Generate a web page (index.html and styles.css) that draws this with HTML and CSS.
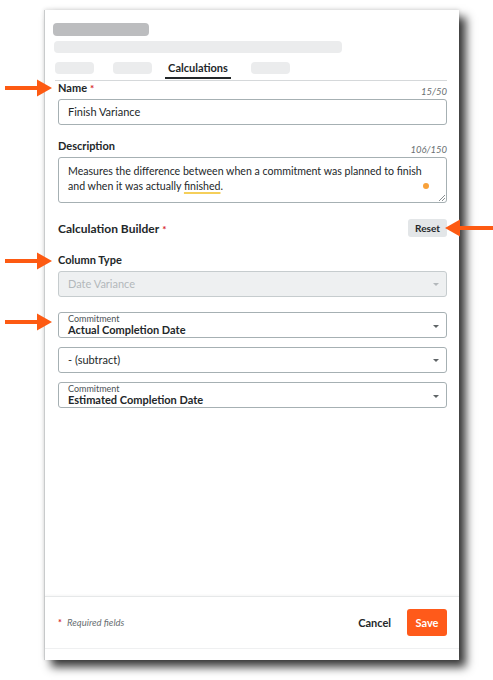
FILE: index.html
```html
<!DOCTYPE html>
<html lang="en">
<head>
    <meta charset="UTF-8">
    <meta name="viewport" content="width=device-width, initial-scale=1.0">
    <title>Calculations</title>
    <link rel="stylesheet" href="styles.css">
</head>
<body>
<div class="stage">
    <div class="panel">
        <div class="panel-head">
            <div class="sk sk-title"></div>
            <div class="sk sk-sub"></div>
            <div class="tabs">
                <div class="sk sk-tab"></div>
                <div class="sk sk-tab tab-2"></div>
                <div class="tab active">Calculations</div>
                <div class="sk sk-tab tab-4"></div>
            </div>
        </div>

        <div class="panel-body">
            <div class="label-row">
                <span class="label">Name<span class="req">*</span></span>
                <span class="count">15/50</span>
            </div>
            <div class="field">Finish Variance</div>

            <div class="label-row group">
                <span class="label">Description</span>
                <span class="count">106/150</span>
            </div>
            <div class="field textarea">
                <p class="desc">Measures the difference between when a commitment was planned to finish<br>and when it was actually <span class="spell">finished</span>.</p>
                <span class="dot"></span>
                <svg class="resize" width="7" height="7" viewBox="0 0 7 7">
                    <path d="M1 7 L7 1 M4 7 L7 4" stroke="#6b7275" stroke-width="0.8" fill="none"/>
                </svg>
            </div>

            <div class="builder-row">
                <span class="builder-title">Calculation Builder<span class="req">*</span></span>
                <button class="btn-reset">Reset</button>
            </div>

            <div class="label-row group">
                <span class="label">Column Type</span>
            </div>
            <div class="field select disabled">
                <span>Date Variance</span>
                <span class="caret"></span>
            </div>

            <div class="field select two-line first">
                <div>
                    <div class="sub">Commitment</div>
                    <div class="main">Actual Completion Date</div>
                </div>
                <span class="caret"></span>
            </div>
            <div class="field select next">
                <span>- (subtract)</span>
                <span class="caret"></span>
            </div>
            <div class="field select two-line next">
                <div>
                    <div class="sub">Commitment</div>
                    <div class="main">Estimated Completion Date</div>
                </div>
                <span class="caret"></span>
            </div>
        </div>

        <div class="panel-foot">
            <span class="req-note"><span class="req">*</span> Required fields</span>
            <button class="btn-cancel">Cancel</button>
            <button class="btn-save">Save</button>
        </div>
    </div>

    <!-- callout arrows -->
    <svg class="arrow arrow-name" width="54" height="20" viewBox="0 0 54 20">
        <path d="M5 8 H37 V1.5 L52 10 L37 18.5 V12 H5 Z" fill="#fd5a12"/>
    </svg>
    <svg class="arrow arrow-type" width="54" height="20" viewBox="0 0 54 20">
        <path d="M5 8 H37 V1.5 L52 10 L37 18.5 V12 H5 Z" fill="#fd5a12"/>
    </svg>
    <svg class="arrow arrow-commit" width="54" height="20" viewBox="0 0 54 20">
        <path d="M5 8 H37 V1.5 L52 10 L37 18.5 V12 H5 Z" fill="#fd5a12"/>
    </svg>
    <svg class="arrow arrow-reset" width="50" height="20" viewBox="0 0 50 20">
        <path d="M50 8 H17 V1.5 L2 10 L17 18.5 V12 H50 Z" fill="#fd5a12"/>
    </svg>
</div>
</body>
</html>
```

FILE: styles.css
```css
body {
    margin: 0;
    font-family: 'Lato', 'Noto Sans', sans-serif;
    color: #232729;
    background-color: #fff;
}

.stage {
    position: relative;
    width: 493px;
    height: 680px;
    padding-top: 10px;
    box-sizing: border-box;
    overflow: hidden;
}

.panel {
    margin-left: 44px;
    width: 415px;
    height: 650px;
    box-sizing: border-box;
    border-left: 1px solid #c9cbcc;
    background-color: #fff;
    box-shadow: 7px 7px 9px rgba(0, 0, 0, 0.78), 0 -1px 4px rgba(0, 0, 0, 0.12);
    display: flex;
    flex-direction: column;
    padding-bottom: 11px;
}

/* header skeleton */
.panel-head {
    padding: 13px 12px 0 8px;
}

.sk {
    border-radius: 4px;
    background-color: #ebeced;
}

.sk-title {
    width: 96px;
    height: 13px;
    background-color: #bcbdbf;
}

.sk-sub {
    width: 288px;
    height: 12px;
    margin: 5px 0 0 1px;
}

.tabs {
    display: flex;
    align-items: flex-start;
    height: 22px;
    margin: 5px 0 0 2px;
    border-bottom: 1px solid #d5d8da;
}

.sk-tab {
    width: 39px;
    height: 12px;
    margin-top: 4px;
}

.tab-2 {
    margin-left: 19px;
}

.tab-4 {
    margin-left: 20px;
}

.tab {
    width: 66px;
    margin-left: 13px;
    height: 19px;
    line-height: 19px;
    text-align: center;
    font-size: 11px;
    font-weight: 700;
}

.tab.active {
    border-bottom: 2px solid #232729;
}

/* form */
.panel-body {
    flex: 1;
    padding: 0 12px 0 13px;
}

.label-row {
    display: flex;
    justify-content: space-between;
    align-items: flex-start;
    height: 18px;
}

.label-row.group {
    margin-top: 14px;
}

.label {
    font-size: 11px;
    font-weight: 700;
    line-height: 14px;
}

.req {
    color: #d7262b;
    font-size: 10px;
    margin-left: 3px;
    font-weight: 700;
    font-style: normal;
}

.count {
    font-size: 9.5px;
    font-style: italic;
    color: #6a7073;
    margin-top: 5px;
    line-height: 12px;
}

.field {
    position: relative;
    height: 26px;
    box-sizing: border-box;
    border: 1px solid #a6b0b3;
    border-radius: 3px;
    padding: 0 9px;
    font-size: 11px;
    line-height: 24px;
}

.textarea {
    height: 46px;
    padding: 6px 9px;
    overflow: hidden;
}

.desc {
    margin: 0;
    font-size: 10.6px;
    line-height: 14.5px;
    white-space: nowrap;
}

.spell {
    text-decoration: underline;
    text-decoration-color: #f5cf5a;
    text-decoration-thickness: 1.5px;
    text-underline-offset: 2px;
}

.dot {
    position: absolute;
    right: 17px;
    top: 25px;
    width: 6px;
    height: 6px;
    border-radius: 50%;
    background-color: #f8a13a;
}

.resize {
    position: absolute;
    right: 1px;
    bottom: 1px;
}

.builder-row {
    display: flex;
    justify-content: space-between;
    align-items: center;
    height: 18px;
    margin-top: 16px;
}

.builder-title {
    font-size: 12px;
    font-weight: 700;
}

.btn-reset {
    width: 39px;
    height: 18px;
    padding: 0;
    border: none;
    border-radius: 3px;
    background-color: #e3e6e8;
    font-family: inherit;
    font-size: 10px;
    font-weight: 700;
    color: #232729;
}

.builder-row + .label-row.group {
    margin-top: 16px;
}

.select {
    display: flex;
    justify-content: space-between;
    align-items: center;
    padding-right: 7px;
}

.select.disabled {
    background-color: #eef0f1;
    border-color: #c6ccce;
    color: #b3b8bb;
}

.select.first {
    margin-top: 15px;
}

.select.next {
    margin-top: 9px;
}

.two-line {
    align-items: flex-start;
    padding-top: 1px;
}

.two-line .caret {
    margin-top: 11px;
}

.sub {
    font-size: 9px;
    line-height: 10px;
    color: #4a5154;
}

.main {
    font-size: 11px;
    line-height: 12px;
    font-weight: 700;
}

.caret {
    width: 0;
    height: 0;
    border-left: 3px solid transparent;
    border-right: 3px solid transparent;
    border-top: 3px solid #5f6467;
}

.disabled .caret {
    border-top-color: #b3b8bb;
}

/* footer */
.panel-foot {
    display: flex;
    align-items: center;
    height: 53px;
    box-sizing: border-box;
    padding: 0 12px 0 13px;
    border-top: 1px solid #e6e8e9;
    border-bottom: 1px solid #eff0f1;
    box-shadow: 0 -1px 2px rgba(0, 0, 0, 0.04);
}

.req-note {
    font-size: 9.5px;
    font-style: italic;
    color: #6a7073;
}

.req-note .req {
    font-size: 9px;
    margin: 0 3px 0 0;
}

.btn-cancel {
    margin-left: auto;
    padding: 0;
    border: none;
    background: none;
    font-family: inherit;
    font-size: 11px;
    font-weight: 700;
    color: #232729;
}

.btn-save {
    margin-left: 16px;
    width: 40px;
    height: 27px;
    padding: 0;
    border: none;
    border-radius: 3px;
    background-color: #ff5a1a;
    color: #fff;
    font-family: inherit;
    font-size: 11px;
    font-weight: 700;
}

/* arrows */
.arrow {
    position: absolute;
    left: 0;
}

.arrow-name {
    top: 78px;
}

.arrow-type {
    top: 251px;
}

.arrow-commit {
    top: 312px;
}

.arrow-reset {
    left: 443px;
    top: 218px;
}
```
